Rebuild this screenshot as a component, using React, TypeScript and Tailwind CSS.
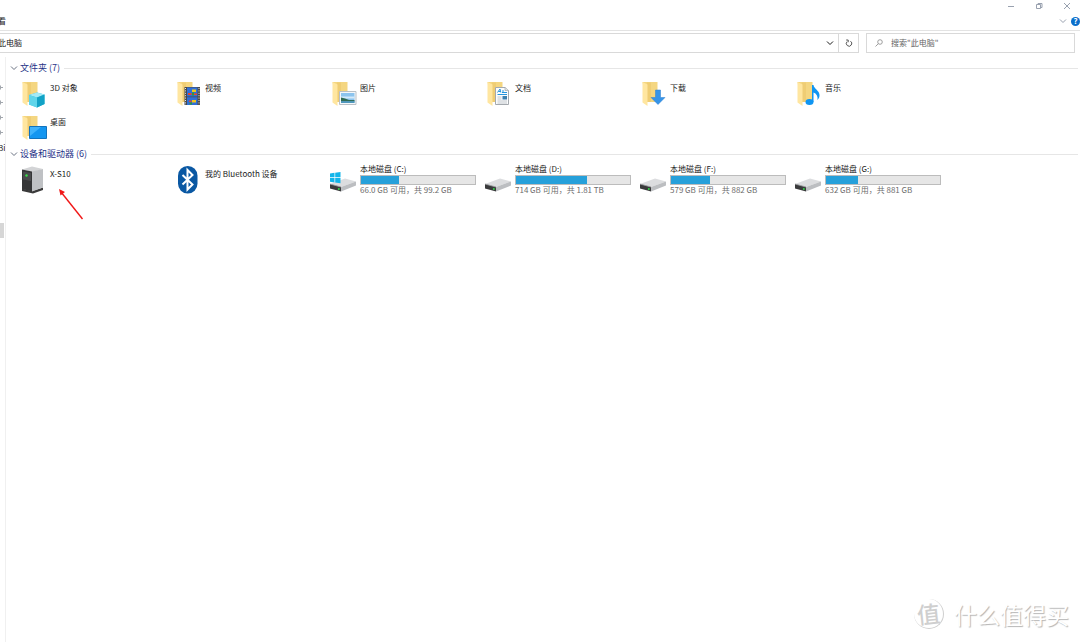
import type { ReactNode } from "react";

type Drive = { name: string; detail: string; used: number; system?: boolean };

const drives: Drive[] = [
  { name: "本地磁盘 (C:)", detail: "66.0 GB 可用，共 99.2 GB", used: 33, system: true },
  { name: "本地磁盘 (D:)", detail: "714 GB 可用，共 1.81 TB", used: 62 },
  { name: "本地磁盘 (F:)", detail: "579 GB 可用，共 882 GB", used: 34 },
  { name: "本地磁盘 (G:)", detail: "632 GB 可用，共 881 GB", used: 28 },
];

const folders: { name: string; overlay: ReactNode }[] = [
  {
    name: "3D 对象",
    overlay: (
      <g>
        <path d="M9 15 17 12.500l7.500 2v9.500l-7.500 3.500-8-3z" fill="#35c0dc" />
        <path d="M9 15 17 12.500l7.500 2-7.500 3z" fill="#a5eaf6" />
        <path d="M9 15 17 17.500v10l-8-3z" fill="#5fd5ea" />
        <path d="M17 17.500l7.500-3V24L17 27.500z" fill="#12a2c6" />
      </g>
    ),
  },
  {
    name: "视频",
    overlay: (
      <g>
        <path d="M9.500 7H25v18H9.500z" fill="#4a4a4a" />
        <path d="M10.500 8v17M24 8v17" stroke="#e6e6e6" strokeDasharray="1 1.400" />
        <path d="M12 7.500h10.500v9H12zM12 17.200h10.500V25H12z" fill="#2f6fd8" />
        <path d="M17 9.500h4v2.500h-4zM17 20h4v2.500h-4z" fill="#f0c51c" />
        <path d="M13 13h3.500v2H13zM19 13.500h3v1.500h-3z" fill="#e8452c" />
        <path d="M17 12.500h2v3h-2zM14.500 22.500h2.500v2h-2.500z" fill="#2f9a3a" />
        <path d="M14 20.500h2.500v1.500H14z" fill="#e8452c" />
      </g>
    ),
  },
  {
    name: "图片",
    overlay: (
      <g>
        <path d="M9.500 11.500h16.500v13H9.500z" fill="#f5f7f9" stroke="#b9c0c6" />
        <path d="M11 13h13.500v10H11z" fill="#8cc4ee" />
        <path d="M11 16.500h13.500v2H11z" fill="#d4eafa" />
        <path d="M11 17.500l4 1 4 1.500h5.500v1.500H11z" fill="#2f6b52" />
        <path d="M11 21.200h13.500V23H11z" fill="#4f97bd" />
      </g>
    ),
  },
  {
    name: "文档",
    overlay: (
      <g>
        <path d="M10.500 7.500h9.500l3.500 3v14h-13z" fill="#fbfcfd" stroke="#a4a9ae" />
        <path d="M20 7.500v3h3.500" fill="#dfe3e6" stroke="#a4a9ae" strokeWidth=".7" />
        <path d="M12.500 12.500l2.500-3.500.8 3.500M13.500 11.500h2M17 11h2M17 12.500h5M12.500 14.500h9.500" stroke="#2495dd" fill="none" />
        <path d="M12.500 17h4M12.500 19h4M12.500 21h9.500M12.500 23h9.500" stroke="#b5babf" strokeWidth=".8" />
        <path d="M17.500 16h4.500v3.500h-4.500z" fill="#3c7fae" />
      </g>
    ),
  },
  {
    name: "下载",
    overlay: <path d="M15.500 10h5v7.500h4.500L18 24.500 11 17.500h4.500z" fill="#3694e8" stroke="#2a7fd0" strokeWidth=".5" />,
  },
  {
    name: "音乐",
    overlay: (
      <g fill="#0f95f2">
        <ellipse cx="14.500" cy="22" rx="4" ry="3" />
        <path d="M17 5h1.500c.5 4 6 5.500 6 10 0 2-.5 3.500-2 5 .5-4-1-6.500-4-7.500V22H17z" />
      </g>
    ),
  },
  {
    name: "桌面",
    overlay: (
      <g>
        <path d="M9.500 12.500h17v12h-17z" fill="#1496f0" stroke="#1273bd" />
        <path d="M10 13h11L10 22z" fill="#3fb2fb" />
      </g>
    ),
  },
];

function FolderIcon({ children }: { children: ReactNode }) {
  return (
    <svg viewBox="0 0 28 28" className="size-7 shrink-0" aria-hidden="true">
      <path d="M2.500 2H17.500V22H6z" fill="#f4d681" />
      <path d="M7 2.500h4V22H7z" fill="#efcd74" />
      <path d="M2.500 2 7.500 4.500V26L2.500 22.500z" fill="#ffe6a0" />
      {children}
    </svg>
  );
}

function TowerIcon() {
  return (
    <svg viewBox="0 0 28 28" className="size-7 shrink-0" aria-hidden="true">
      <path d="M2 22.500l10 2.500 11-3.500V24l-10 3.500L2 25z" fill="#3a3a3a" />
      <path d="M2 3.500 12 .5l11 2.500-10 3z" fill="#d3d4d6" />
      <path d="M2 3.500 12 5.500v20L2 23z" fill="#353637" />
      <path d="M12 5.500 23 3v18.500l-11 4z" fill="#bfc1c4" />
      <path d="M3 5.500l8 1.500v8l-8-1.500z" fill="#4a4b4d" />
      <circle cx="6.500" cy="9.500" r="1.200" fill="#38e04a" />
    </svg>
  );
}

function BluetoothIcon() {
  return (
    <svg viewBox="0 0 28 28" className="size-7 shrink-0" aria-hidden="true">
      <rect x="3" y="0" width="19.500" height="27.500" rx="9.700" fill="#0a58a3" />
      <path d="M7.500 9 17.500 18.500l-5 5V4l5 5-10 9.500" fill="none" stroke="#fff" strokeWidth="2" />
    </svg>
  );
}

function DriveIcon({ system }: { system?: boolean }) {
  return (
    <svg viewBox="0 0 28 28" className="size-7 shrink-0" aria-hidden="true">
      <path d="M0 18 15 12.500l11 3L11 21z" fill="#dcdddf" />
      <path d="M11 21l15-5.500v4L11 25.500z" fill="#bcbec1" />
      <path d="M0 18l11 3v4.500L0 22.500z" fill="#3a3b3c" />
      <path d="M0 18l11 3" stroke="#9b9da0" strokeWidth=".8" />
      <circle cx="8.800" cy="23" r="1" fill="#35d64a" />
      {system && (
        <path
          d="M0 7.500l4.500-.7v4.500H0zM5.200 6.700 10.500 6v5.300H5.200zM0 12h4.500v4.500L0 15.800zM5.200 12h5.300v5.300l-5.300-.7z"
          fill="#12b5ea"
        />
      )}
    </svg>
  );
}

function Chevron({ className }: { className: string }) {
  return (
    <svg viewBox="0 0 8 8" className={className} fill="none" aria-hidden="true">
      <path d="M1 2.500l3 3 3-3" stroke="currentColor" />
    </svg>
  );
}

function Group({ title, children }: { title: string; children: ReactNode }) {
  return (
    <section>
      <h2 className="flex h-4 items-center text-[9px] text-[#1f3287]">
        <button type="button" className="flex items-center gap-0.5">
          <Chevron className="size-2 text-gray-500" />
          {title}
        </button>
        <span className="ml-1 h-px flex-1 bg-[#e6e6e6]" />
      </h2>
      <ul className="mt-1 ml-2.5 grid grid-cols-[repeat(auto-fill,155px)] gap-y-1.5">{children}</ul>
    </section>
  );
}

function Tile({ icon, name }: { icon: ReactNode; name: string }) {
  return (
    <li className="flex gap-0.5">
      {icon}
      <span className="mt-0.5 leading-3">{name}</span>
    </li>
  );
}

function DriveTile({ drive }: { drive: Drive }) {
  return (
    <li className="flex gap-0.5">
      <DriveIcon system={drive.system} />
      <div className="-mt-0.5 w-[116px] leading-[10px]">
        <div>{drive.name}</div>
        <div className="mt-px h-2.5 border border-[#bcbcbc] bg-[#e6e6e6]">
          <div className="h-full bg-[#26a0da]" style={{ width: `${drive.used}%` }} />
        </div>
        <div className="whitespace-nowrap text-[#6d6d6d]">{drive.detail}</div>
      </div>
    </li>
  );
}

function WindowBar() {
  return (
    <header className="border-b border-[#e3e3e3]">
      <div className="-mr-px flex h-3 justify-end text-gray-400">
        <button type="button" aria-label="最小化" className="flex w-7 items-center justify-center">
          <svg viewBox="0 0 8 8" className="size-2">
            <path d="M1 4.500h6" stroke="currentColor" />
          </svg>
        </button>
        <button type="button" aria-label="还原" className="flex w-7 items-center justify-center">
          <svg viewBox="0 0 8 8" className="size-2" fill="none" stroke="currentColor">
            <path d="M1.500 2.500h4v4h-4zM3 2.500v-1h4v4H5.500" />
          </svg>
        </button>
        <button type="button" aria-label="关闭" className="flex w-7 items-center justify-center">
          <svg viewBox="0 0 8 8" className="size-2">
            <path d="M1 1l6 6M7 1 1 7" stroke="currentColor" />
          </svg>
        </button>
      </div>
      <div className="flex h-[18px] items-center justify-between">
        <button type="button" className="-ml-0.5">看</button>
        <div className="flex items-center gap-1">
          <button type="button" aria-label="展开功能区">
            <Chevron className="size-2 text-gray-400" />
          </button>
          <button
            type="button"
            aria-label="帮助"
            className="flex size-[9px] items-center justify-center rounded-full bg-[#0b6fcb] text-[8px] font-bold text-white"
          >
            ?
          </button>
        </div>
      </div>
    </header>
  );
}

function AddressRow() {
  return (
    <div className="mt-0.5 mr-[5px] flex h-5 gap-[7px]">
      <div className="flex flex-1 border border-l-0 border-[#d9d9d9]">
        <span className="-ml-0.5 flex flex-1 items-center">此电脑</span>
        <button type="button" aria-label="历史记录" className="flex w-4 items-center justify-center">
          <Chevron className="size-2" />
        </button>
        <button
          type="button"
          aria-label="刷新"
          className="flex w-5 items-center justify-center border-l border-[#d9d9d9]"
        >
          <svg viewBox="0 0 8 8" className="size-2" fill="none" stroke="#444" strokeWidth=".9">
            <path d="M5.500 2.200A2.700 2.700 0 1 1 2 2.700M1.200 1h2v2.200" />
          </svg>
        </button>
      </div>
      <label className="flex w-[209px] items-center gap-2 border border-[#d9d9d9] pl-2">
        <svg viewBox="0 0 8 8" className="size-2" fill="none" stroke="#888" strokeWidth=".8">
          <circle cx="5" cy="3" r="2.300" />
          <path d="M3.300 4.700.5 7.500" />
        </svg>
        <input
          type="text"
          aria-label="搜索"
          placeholder={'搜索"此电脑"'}
          className="min-w-0 flex-1 outline-none placeholder:text-[#666]"
        />
      </label>
    </div>
  );
}

function NavPane() {
  return (
    <nav className="w-1.5 shrink-0 overflow-hidden border-r border-[#f0f0f0] pt-[23px]">
      {[0, 1, 2, 3].map((pin) => (
        <svg key={pin} viewBox="0 0 3 15" className="h-[15px] w-[3px]">
          <path d="M0 5l1 1v1h2v1H1v1L0 10z" fill="#a3a8ae" />
        </svg>
      ))}
      <div className="-ml-0.5 leading-[15px]">Bi</div>
      <div className="mt-[68px] h-[15px] w-1 bg-[#d6d6d6]" />
    </nav>
  );
}

function Watermark() {
  return (
    <div className="absolute right-[11px] bottom-3 flex items-center gap-2.5 text-[#cfcfcf]">
      <span className="flex size-[30px] items-center justify-center rounded-full border-r border-b border-[#cfcfcf] text-[23px] leading-none font-medium">
        <span className="-rotate-6">值</span>
      </span>
      <span className="text-[23px] leading-8 text-white [text-shadow:1px_1px_1px_#b5b5b5]">什么值得买</span>
    </div>
  );
}

export default function App() {
  return (
    <div className="relative flex min-h-screen flex-col overflow-hidden bg-white font-['Noto_Sans_CJK_SC',sans-serif] text-[8px] text-[#1a1a1a]">
      <WindowBar />
      <AddressRow />
      <div className="mt-1 flex flex-1">
        <NavPane />
        <main className="relative mr-0.5 ml-1 flex flex-1 flex-col gap-1 pt-[3px]">
          <Group title="文件夹 (7)">
            {folders.map((folder) => (
              <Tile key={folder.name} name={folder.name} icon={<FolderIcon>{folder.overlay}</FolderIcon>} />
            ))}
          </Group>
          <Group title="设备和驱动器 (6)">
            <Tile name="X-S10" icon={<TowerIcon />} />
            <Tile name="我的 Bluetooth 设备" icon={<BluetoothIcon />} />
            {drives.map((drive) => (
              <DriveTile key={drive.name} drive={drive} />
            ))}
          </Group>
          {/* pointer to the camera */}
          <svg viewBox="0 0 26 32" className="absolute top-[131px] left-12 h-8 w-[26px]" aria-hidden="true">
            <path d="M24.500 31 3 4" stroke="#f01818" strokeWidth="1.400" />
            <path d="M1 1l1.500 6.500L7 4z" fill="#f01818" />
          </svg>
        </main>
      </div>
      <Watermark />
    </div>
  );
}
